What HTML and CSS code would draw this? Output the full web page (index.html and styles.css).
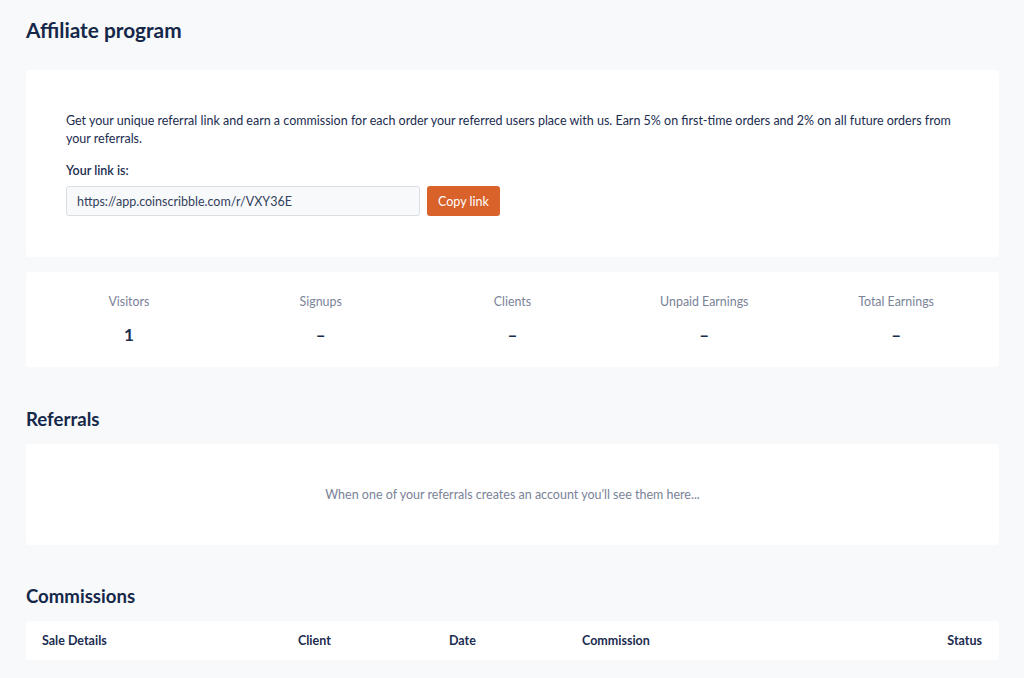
FILE: index.html
```html
<!DOCTYPE html>
<html lang="en">
<head>
  <meta charset="UTF-8">
  <title>Affiliate program</title>
  <link rel="stylesheet" href="styles.css">
</head>
<body>
  <div class="page">
    <h1 class="page-title">Affiliate program</h1>

    <!-- Referral link -->
    <div class="card link-card">
      <p class="intro">Get your unique referral link and earn a commission for each order your referred users place with us. Earn 5% on first-time orders and 2% on all future orders from your referrals.</p>
      <p class="link-label">Your link is:</p>
      <div class="link-row">
        <input class="link-input" type="text" value="https://app.coinscribble.com/r/VXY36E" readonly>
        <button class="copy-btn">Copy link</button>
      </div>
    </div>

    <!-- Stats -->
    <div class="card stats">
      <div class="stat"><div class="stat-label">Visitors</div><div class="stat-value">1</div></div>
      <div class="stat"><div class="stat-label">Signups</div><div class="stat-value">–</div></div>
      <div class="stat"><div class="stat-label">Clients</div><div class="stat-value">–</div></div>
      <div class="stat"><div class="stat-label">Unpaid Earnings</div><div class="stat-value">–</div></div>
      <div class="stat"><div class="stat-label">Total Earnings</div><div class="stat-value">–</div></div>
    </div>

    <h2 class="section-title">Referrals</h2>
    <div class="card empty">When one of your referrals creates an account you'll see them here...</div>

    <h2 class="section-title section-title--last">Commissions</h2>
    <div class="card table-head">
      <div class="col col-sale">Sale Details</div>
      <div class="col col-client">Client</div>
      <div class="col col-date">Date</div>
      <div class="col col-comm">Commission</div>
      <div class="col col-status">Status</div>
    </div>
  </div>
</body>
</html>
```
FILE: styles.css
```css
/* Global */
body {
  margin: 0;
  background: #f8f9fb;
  font-family: 'Lato', 'Open Sans', Arial, sans-serif;
  color: #1b2c4f;
}
.page {
  padding: 17px 25px 0 26px;
}

/* Headings */
.page-title {
  margin: 0 0 28px;
  font-size: 20.8px;
  font-weight: 700;
  color: #152849;
}
.section-title {
  margin: 41px 0 14px;
  font-size: 18.6px;
  font-weight: 700;
  color: #152849;
}
.section-title--last {
  margin-top: 40px;
}

/* Cards */
.card {
  background: #ffffff;
  border-radius: 4px;
}
.link-card {
  padding: 42px 40px 41px;
}
.intro {
  margin: 0;
  font-size: 12.5px;
  line-height: 18px;
}
.link-label {
  margin: 15px 0 8px;
  font-size: 12.5px;
  font-weight: 600;
}
.link-row {
  display: flex;
  gap: 7px;
  align-items: center;
}
.link-input {
  width: 354px;
  height: 30px;
  box-sizing: border-box;
  padding: 0 10px;
  border: 1px solid #d9dde4;
  border-radius: 3px;
  background: #f8f9fb;
  font-family: inherit;
  font-size: 12.5px;
  color: #33415c;
}
.copy-btn {
  height: 30px;
  padding: 0 11px;
  border: none;
  border-radius: 3px;
  background: #d9622b;
  color: #ffffff;
  font-family: inherit;
  font-size: 12.5px;
  cursor: pointer;
}

/* Stats */
.stats {
  display: flex;
  margin-top: 15px;
  padding: 22px 7px 22px;
}
.stat {
  flex: 1;
  text-align: center;
}
.stat-label {
  font-size: 12.4px;
  color: #7a8398;
}
.stat-value {
  margin-top: 15px;
  font-size: 17px;
  font-weight: 700;
  color: #1b2c4f;
}

/* Referrals */
.empty {
  padding: 43px 0 43px;
  text-align: center;
  font-size: 12.5px;
  color: #7a8398;
}

/* Commissions table */
.table-head {
  display: flex;
  align-items: center;
  height: 39px;
  padding: 0 17px 0 16px;
  font-size: 12.5px;
  font-weight: 700;
}
.col-sale { width: 256px; }
.col-client { width: 151px; }
.col-date { width: 133px; }
.col-comm { flex: 1; }
.col-status { text-align: right; }
```
